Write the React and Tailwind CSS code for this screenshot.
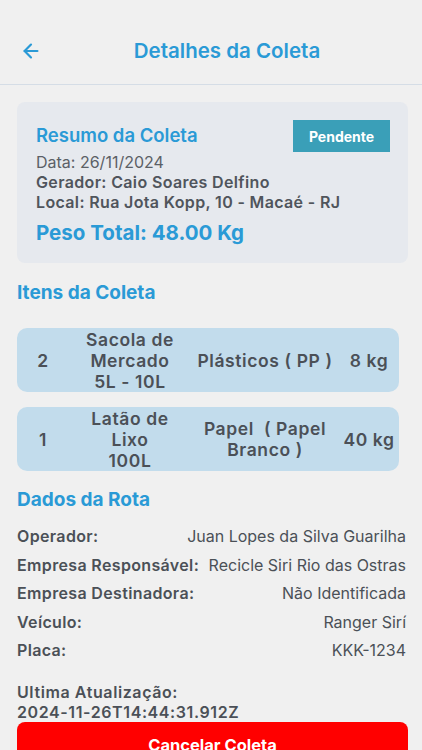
import { ArrowLeft } from "lucide-react";

const itens = [
  { qtd: "2", nome: ["Sacola de", "Mercado", "5L - 10L"], tipo: ["Plásticos ( PP )"], peso: "8 kg" },
  { qtd: "1", nome: ["Latão de", "Lixo", "100L"], tipo: ["Papel  ( Papel", "Branco )"], peso: "40 kg" },
];

const rota = [
  ["Operador:", "Juan Lopes da Silva Guarilha"],
  ["Empresa Responsável:", "Recicle Siri Rio das Ostras"],
  ["Empresa Destinadora:", "Não Identificada"],
  ["Veículo:", "Ranger Sirí"],
  ["Placa:", "KKK-1234"],
];

const App = () => {
  return (
    <div
      className="w-[422px] h-[750px] overflow-hidden bg-[#f0f0f0]"
      style={{ fontFamily: "Inter, 'Noto Sans', sans-serif" }}
    >
      <header className="h-[85px] flex items-start pt-[37px] px-5 border-b border-[#d5dde6]">
        <button type="button" className="w-6 h-7 flex items-center text-[#2a9ad6]">
          <ArrowLeft size={22} strokeWidth={2.4} />
        </button>
        <h1 className="flex-1 text-center text-[20.5px] leading-7 font-semibold text-[#2a9ad6] pl-2">
          Detalhes da Coleta
        </h1>
      </header>

      <div className="pl-[17px] pr-[14px]">
        <div className="mt-[17px] bg-[#e6e9ee] rounded-lg pt-[18px] pb-4 pl-[19px] pr-[18px]">
          <div className="flex items-center justify-between h-8">
            <span className="text-[18.5px] font-semibold text-[#2a9ad6]">Resumo da Coleta</span>
            <span className="w-[97px] h-8 flex items-center justify-center bg-[#3a9fb8] text-white text-[14px] font-bold">
              Pendente
            </span>
          </div>
          <p className="text-[16px] leading-5 text-[#5b6066]">Data: 26/11/2024</p>
          <p className="text-[16px] leading-5 font-semibold tracking-[0.35px] text-[#50555c]">
            Gerador: Caio Soares Delfino
          </p>
          <p className="text-[16px] leading-5 font-semibold tracking-[0.35px] text-[#50555c]">
            Local: Rua Jota Kopp, 10 - Macaé - RJ
          </p>
          <p className="mt-[7px] text-[20.5px] leading-7 font-bold text-[#2a9ad6]">Peso Total: 48.00 Kg</p>
        </div>

        <h2 className="mt-4 text-[19px] leading-7 font-bold text-[#2a9ad6]">Itens da Coleta</h2>

        <div className="mt-[21px] flex flex-col gap-[15px] pr-[9px]">
          {itens.map((item, i) => (
            <div
              key={i}
              className="flex items-center bg-[#c2dcec] rounded-[10px] py-[0.5px] text-[17.5px] leading-[21px] tracking-[0.6px] font-semibold text-[#4b5057]"
            >
              <div className="w-[52px] text-center">{item.qtd}</div>
              <div className="w-[122px] text-center">
                {item.nome.map((l) => (
                  <div key={l}>{l}</div>
                ))}
              </div>
              <div className="w-[148px] text-center whitespace-pre">
                {item.tipo.map((l) => (
                  <div key={l}>{l}</div>
                ))}
              </div>
              <div className="flex-1 text-center">{item.peso}</div>
            </div>
          ))}
        </div>

        <h2 className="mt-[15px] text-[19px] leading-7 font-bold text-[#2a9ad6]">Dados da Rota</h2>

        <div className="mt-2 pr-[2px]">
          {rota.map(([label, valor]) => (
            <div key={label} className="flex justify-between h-[28.5px] items-center text-[16px] text-[#4b5057]">
              <span className="font-semibold tracking-[0.35px]">{label}</span>
              <span>{valor}</span>
            </div>
          ))}
        </div>

        <p className="mt-[17px] text-[16px] leading-5 font-semibold tracking-[0.6px] text-[#4b5057]">
          Ultima Atualização:
          <br />
          2024-11-26T14:44:31.912Z
        </p>

        <button
          type="button"
          className="w-full h-12 bg-[#ff0000] rounded-lg text-white text-[16.5px] font-bold"
        >
          Cancelar Coleta
        </button>
      </div>
    </div>
  );
};

export default App;
